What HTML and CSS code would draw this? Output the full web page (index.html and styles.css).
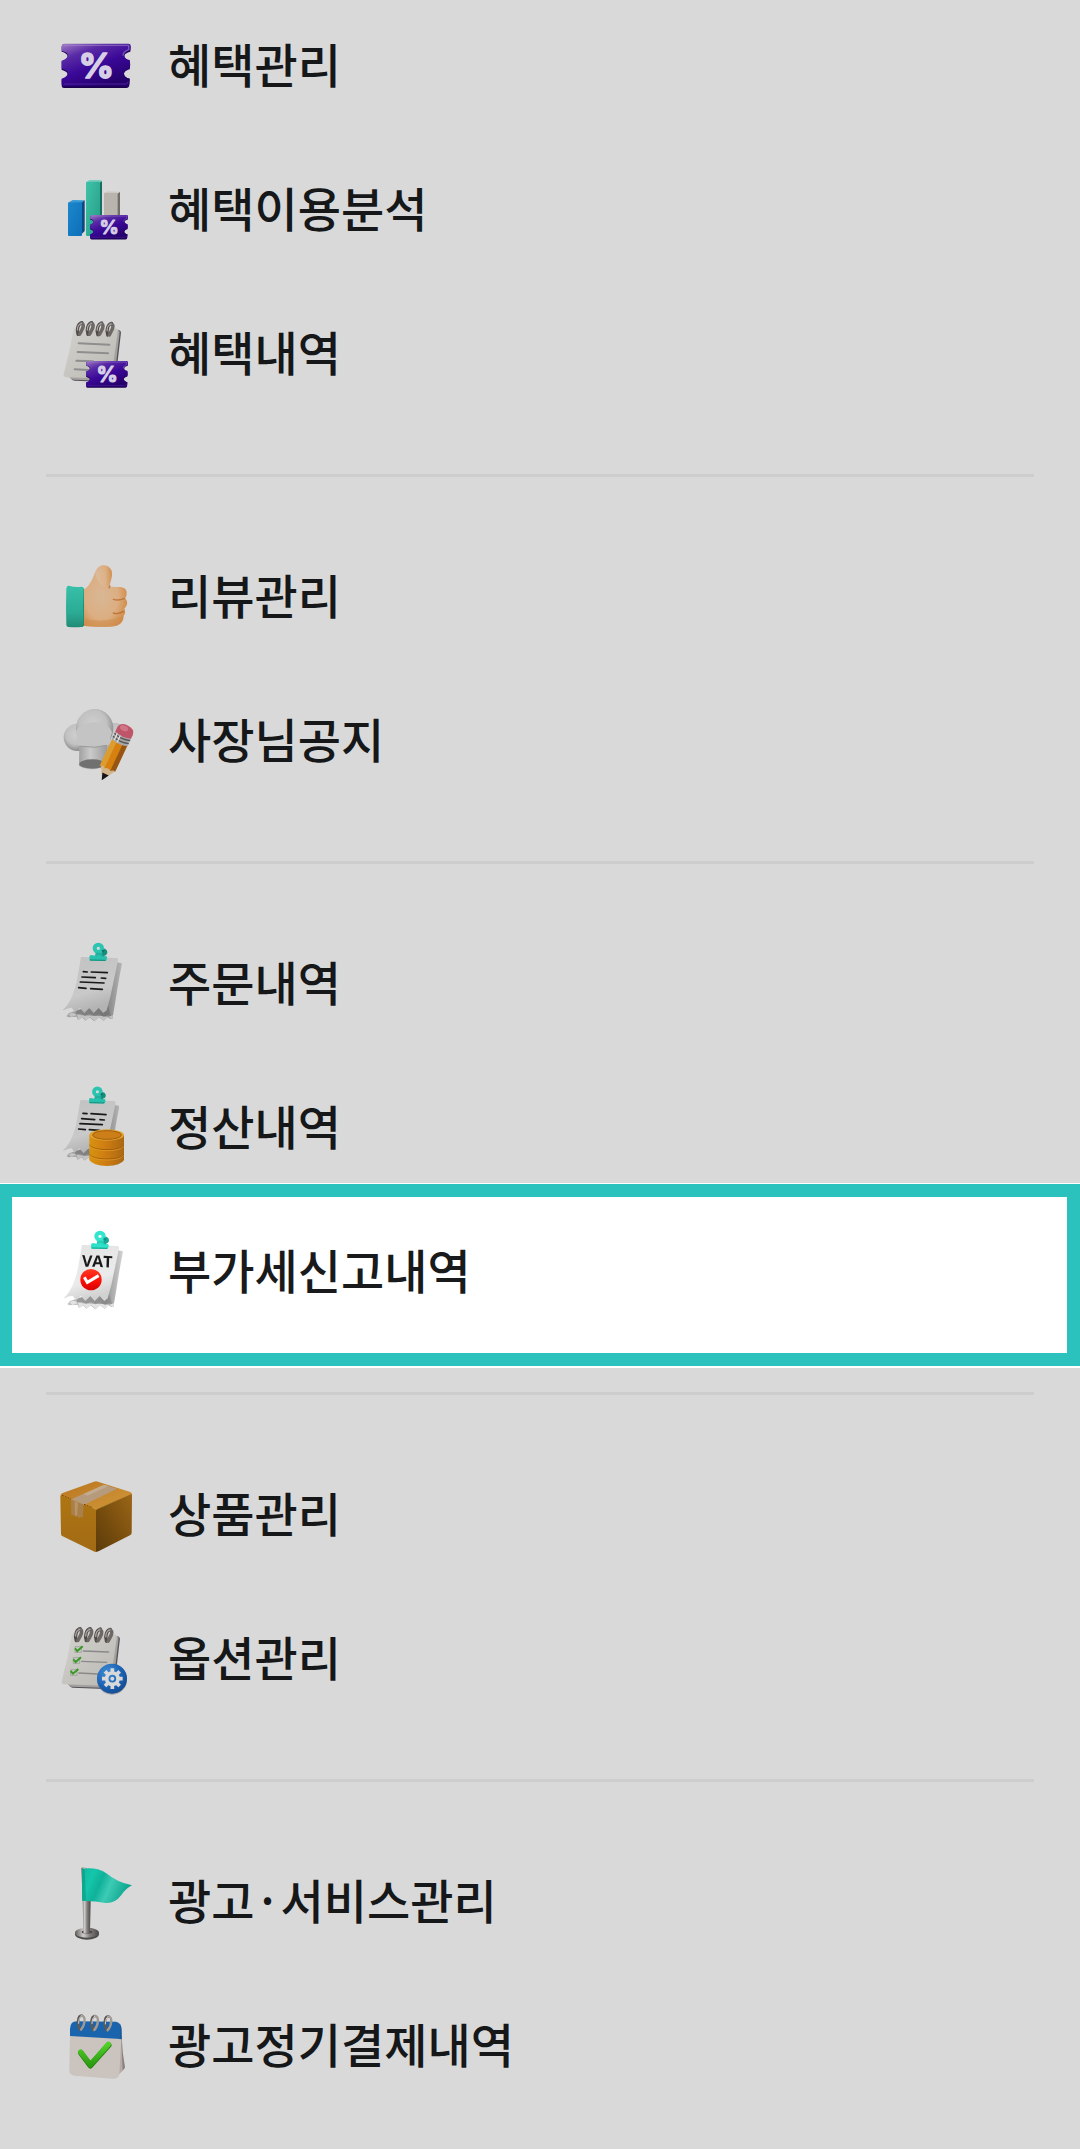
FILE: index.html
```html
<!DOCTYPE html>
<html lang="ko">
<head>
  <meta charset="UTF-8">
  <meta name="viewport" content="width=device-width, initial-scale=1">
  <title>전체 메뉴</title>
  <link rel="stylesheet" href="styles.css">
</head>
<body>
  <!-- shared gradients and symbols -->
  <svg class="defs" aria-hidden="true">
    <defs>
      <linearGradient id="purple" x1="0" y1="0" x2=".6" y2="1">
        <stop offset="0" stop-color="#a07cc4"/>
        <stop offset=".28" stop-color="#5a2ba6"/>
        <stop offset=".6" stop-color="#3a0897"/>
        <stop offset="1" stop-color="#25006c"/>
      </linearGradient>
      <linearGradient id="paper" x1="0" y1="0" x2="1" y2="1">
        <stop offset="0" stop-color="#d3d2cd"/>
        <stop offset="1" stop-color="#b9b8b3"/>
      </linearGradient>
      <linearGradient id="receiptFront" x1="0" y1="0" x2=".3" y2="1">
        <stop offset="0" stop-color="#c2c2c2"/>
        <stop offset=".7" stop-color="#c9c9c9"/>
        <stop offset="1" stop-color="#b3b3b3"/>
      </linearGradient>
      <linearGradient id="receiptBack" x1="0" y1="0" x2="1" y2="0">
        <stop offset="0" stop-color="#a8a8a8"/>
        <stop offset=".7" stop-color="#808080"/>
        <stop offset="1" stop-color="#b4b4b4"/>
      </linearGradient>
      <linearGradient id="metal" x1="0" y1="0" x2="1" y2="0">
        <stop offset="0" stop-color="#5e5c5a"/>
        <stop offset=".35" stop-color="#cfcdca"/>
        <stop offset=".6" stop-color="#858280"/>
        <stop offset="1" stop-color="#4a4847"/>
      </linearGradient>
      <linearGradient id="blueBar" x1="0" y1="0" x2="1" y2="1">
        <stop offset="0" stop-color="#1b87cc"/>
        <stop offset="1" stop-color="#0d6fb8"/>
      </linearGradient>
      <linearGradient id="greenBar" x1="0" y1="0" x2="1" y2="1">
        <stop offset="0" stop-color="#3fc2a9"/>
        <stop offset="1" stop-color="#249d85"/>
      </linearGradient>
      <linearGradient id="sleeve" x1="0" y1="0" x2="0" y2="1">
        <stop offset="0" stop-color="#37c0a9"/>
        <stop offset=".65" stop-color="#2bab95"/>
        <stop offset="1" stop-color="#218a74"/>
      </linearGradient>
      <radialGradient id="skin" cx=".42" cy=".5" r=".62">
        <stop offset="0" stop-color="#d8b795"/>
        <stop offset=".6" stop-color="#dcae82"/>
        <stop offset="1" stop-color="#d08a45"/>
      </radialGradient>
      <linearGradient id="thumb" x1="0" y1="0" x2="1" y2="0">
        <stop offset="0" stop-color="#dcc0a6"/>
        <stop offset=".6" stop-color="#deb48b"/>
        <stop offset="1" stop-color="#cd8540"/>
      </linearGradient>
      <radialGradient id="hat" cx=".45" cy=".4" r=".62">
        <stop offset="0" stop-color="#cfcfcf"/>
        <stop offset=".6" stop-color="#c1c1c1"/>
        <stop offset="1" stop-color="#858585"/>
      </radialGradient>
      <linearGradient id="hatBand" x1="0" y1="0" x2="1" y2="0">
        <stop offset="0" stop-color="#a0a0a0"/>
        <stop offset=".4" stop-color="#cacaca"/>
        <stop offset="1" stop-color="#9a9a9a"/>
      </linearGradient>
      <linearGradient id="gold" x1="0" y1="0" x2="1" y2="0">
        <stop offset="0" stop-color="#d8930f"/>
        <stop offset=".45" stop-color="#cf7d12"/>
        <stop offset="1" stop-color="#a96812"/>
      </linearGradient>
      <linearGradient id="boxTop" x1="0" y1="0" x2="1" y2="1">
        <stop offset="0" stop-color="#b9741f"/>
        <stop offset="1" stop-color="#d39b3c"/>
      </linearGradient>
      <linearGradient id="boxLeft" x1="0" y1="0" x2="0" y2="1">
        <stop offset="0" stop-color="#ae7512"/>
        <stop offset="1" stop-color="#a26a15"/>
      </linearGradient>
      <linearGradient id="boxRight" x1="0" y1="1" x2="1" y2="0">
        <stop offset="0" stop-color="#5c3b0b"/>
        <stop offset=".4" stop-color="#744b0d"/>
        <stop offset="1" stop-color="#9c6617"/>
      </linearGradient>
      <radialGradient id="blueBall" cx=".35" cy=".3" r=".75">
        <stop offset="0" stop-color="#3f8ed6"/>
        <stop offset=".6" stop-color="#1d63b4"/>
        <stop offset="1" stop-color="#144b91"/>
      </radialGradient>
      <linearGradient id="flag" x1="0" y1="0" x2="1" y2=".3">
        <stop offset="0" stop-color="#10b79d"/>
        <stop offset=".25" stop-color="#14c6ab"/>
        <stop offset=".45" stop-color="#0fb199"/>
        <stop offset=".65" stop-color="#3ccbb5"/>
        <stop offset="1" stop-color="#0fa68f"/>
      </linearGradient>
      <linearGradient id="green" x1="0" y1="0" x2="0" y2="1">
        <stop offset="0" stop-color="#52cf28"/>
        <stop offset="1" stop-color="#2e9c12"/>
      </linearGradient>
      <linearGradient id="red" x1="0" y1="0" x2="0" y2="1">
        <stop offset="0" stop-color="#d8321f"/>
        <stop offset=".5" stop-color="#d90f08"/>
        <stop offset="1" stop-color="#b80000"/>
      </linearGradient>
    </defs>

    <symbol id="ticket" viewBox="0 0 210 134">
      <path fill="#1b0050" d="M8 3H202q6 1 6 7l-1 14c-10 2-18 7-18 14s7 11 16 13q3 12 0 26c-9 2-17 7-17 14s7 12 17 14l-1 19q-1 9-9 9H8q-7 0-7-7V107c10-2 18-7 18-14S11 81 1 79V53c10-2 18-7 18-14S11 26 1 24V9q0-6 7-6z"/>
      <path fill="url(#purple)" d="M8 0H202q6 0 6 6l-1 14c-10 2-18 9-18 16s7 11 16 13q3 12 0 26c-9 2-17 9-17 16s7 12 17 14l-1 15q-1 8-9 8H8q-7 0-7-7V105c10-2 18-9 18-16S11 77 1 75V51c10-2 18-9 18-16S11 24 1 22V7q0-7 7-7z"/>
      <path fill="none" stroke="#a58bd0" stroke-width="4" opacity=".55" d="M8 5H202v13c-9 3-17 9-17 18"/>
      <path fill="none" stroke="#5a2fa8" stroke-width="3" opacity=".7" d="M8 121H195q5-1 5-7"/>
      <text class="percent" x="105" y="103">%</text>
    </symbol>

    <symbol id="clip" viewBox="0 0 60 56">
      <path fill="#168e7e" d="M40 18c8-2 15 4 15 11 0 6-4 9-9 10l2 7-14-2z"/>
      <circle cx="28" cy="17" r="11" fill="none" stroke="#2ac4b0" stroke-width="12"/>
      <circle cx="42" cy="25" r="4" fill="#10786b"/>
      <path fill="#20b09d" d="M20 30h18l4 10H18z"/>
      <path fill="#27c0ac" d="M6 37q-5 0-5 8t2 9l46 1q4-1 5-8 0-7-3-7-10 2-17-1-5-5-10 0-6 1-18-2z"/>
      <path stroke="#14897a" stroke-width="3" d="M3 52l47 1"/>
    </symbol>

    <symbol id="receipt" viewBox="0 0 180 200">
      <path fill="url(#receiptBack)" d="M160 16l15 2q2 1 1 7-7 34-14 78-6 40-14 83-12-2-14-7l-12 12-14-11-14 13-14-12-13 10-9-10-13 8-4-10-24 2-7-3 8-10 60-20z"/>
      <path fill="#c2c2c2" d="M17 172l8 8 17-6 4 15 13-9 9 11 13-11 14 13 14-13 13 12 13-13 13 8 2-12-14 4-20-2-60-2-30-8z"/>
      <path fill="#6c6c6c" opacity=".5" d="M36 160l100-12 8 30-10-4-12 6-13-9-15 7-14-8-14 7-13-7-14 4z"/>
      <path fill="url(#receiptFront)" d="M55 0L161 3q5 1 4 7-6 30-15 72-7 40-19 78l-10 8-14-15-15 15-13-15-15 15-13-15-15 13-10-14q-12 1-25 8-2 0-1-2C16 146 35 110 43 63Q49 31 53 5q0-4 2-5z"/>
    </symbol>

    <symbol id="notepad" viewBox="0 0 190 200">
      <path fill="#565058" d="M160 26l15 4q7 2 5 12l-17 145q-1 6-8 6l-120-5q-8-1-12-9l-6-12z"/>
      <path fill="#a3a19d" d="M155 24l16 5q7 2 5 12l-17 143q-1 6-8 5L31 185q-8-1-12-9l-6-12z"/>
      <path fill="url(#paper)" d="M32 26q3-8 12-8l119 6q9 1 8 9l-21 144q-1 6-8 5L9 177q-10-1-8-10L20 90z"/>
      <g fill="none" stroke-linecap="round">
        <path stroke="#4f4a48" stroke-width="10" d="M46 43c-6-17 1-34 12-37M77 43c-6-17 1-34 12-37M108 44c-6-17 1-34 12-37M139 45c-6-17 1-34 12-37"/>
        <path stroke="#6d6765" stroke-width="11" d="M56 8c12 3 5 17-5 34M87 8c12 3 5 17-5 34M118 9c12 3 5 17-5 34M149 10c12 3 5 17-5 34"/>
        <path stroke="#aaa6a3" stroke-width="4" d="M44 29c0-11 6-19 13-21M75 29c0-11 6-19 13-21M106 30c0-11 6-19 13-21M137 31c0-11 6-19 13-21"/>
      </g>
    </symbol>
  </svg>

  <nav class="menu" aria-label="전체 메뉴">
    <ul class="menu-group">
      <li>
        <a class="menu-item" href="#benefit">
          <svg class="icon" viewBox="48 18 240 240" aria-hidden="true">
            <use href="#ticket" x="64" y="71" width="210" height="134"/>
          </svg>
          <span class="label">혜택관리</span>
        </a>
      </li>
      <li>
        <a class="menu-item" href="#benefit-analysis">
          <svg class="icon" viewBox="48 450 240 240" aria-hidden="true">
            <path fill="#0a4a80" d="M118 548l16-7v92l-14 14z"/>
            <path fill="#3b9ad4" d="M84 548l14-8 36 1-10 8z"/>
            <rect x="84" y="547" width="42" height="101" rx="3" fill="url(#blueBar)"/>
            <path fill="#17705f" d="M176 488l10-6v116h-10z"/>
            <path fill="#76cdbc" d="M138 488l10-8h34l4 4-10 6z"/>
            <rect x="138" y="485" width="42" height="163" rx="3" fill="url(#greenBar)"/>
            <path fill="#716d69" d="M230 520l10-4v80h-10z"/>
            <path fill="#d2cec8" d="M192 519l12-6 36 2-8 6z"/>
            <rect x="192" y="518" width="41" height="80" rx="3" fill="#b9b4ad"/>
            <use href="#ticket" x="150" y="585" width="115" height="74"/>
          </svg>
          <span class="label">혜택이용분석</span>
        </a>
      </li>
      <li>
        <a class="menu-item" href="#benefit-history">
          <svg class="icon" viewBox="48 42 240 240" aria-hidden="true">
            <use href="#notepad" x="70" y="62" width="182" height="192"/>
            <path fill="none" stroke="#8e8e8e" stroke-width="6" stroke-linecap="round" d="M116 130l92 4M113 156l91 4M109 182l50 2M104 208l40 2"/>
            <use href="#ticket" x="138" y="183" width="127" height="81"/>
          </svg>
          <span class="label">혜택내역</span>
        </a>
      </li>
    </ul>

    <ul class="menu-group">
      <li>
        <a class="menu-item" href="#review">
          <svg class="icon" viewBox="48 51 240 240" aria-hidden="true">
            <path fill="url(#skin)" d="M128 150c20-9 29-32 38-54 7-18 22-24 37-16 12 7 15 19 12 33-2 10-5 18-5 27l27 1c15 0 24 7 23 18 0 8-2 12-5 16 9 8 9 21-2 31 4 7 3 15-2 21 0 20-13 31-36 33-34 2-63 0-87-3z"/>
            <path fill="url(#thumb)" opacity=".7" d="M166 96c8-20 23-25 37-18 12 7 15 19 12 33-2 10-6 18-7 27-18 8-40-10-42-42z"/>
            <path fill="none" stroke="#b96a2c" stroke-width="4" stroke-linecap="round" opacity=".8" d="M220 178q16 5 34-3M220 219q14 5 30-5M210 138l-3 6"/>
            <path fill="#ce8b4c" opacity=".5" d="M128 235q60 16 121-7-4 26-34 29-44 4-87-1z"/>
            <path fill="#1c7a67" d="M124 142q8 0 8 10v101q0 8-6 8z"/>
            <path fill="url(#sleeve)" d="M86 137q21 6 39 3 7 0 6 10-2 50 0 101 0 10-7 10-19 2-38 0-7 0-7-8-2-52 0-107 1-9 7-9z"/>
          </svg>
          <span class="label">리뷰관리</span>
        </a>
      </li>
      <li>
        <a class="menu-item" href="#notice">
          <svg class="icon" viewBox="48 483 240 240" aria-hidden="true">
            <circle cx="222" cy="590" r="41" fill="url(#hat)"/>
            <circle cx="112" cy="592" r="41" fill="url(#hat)"/>
            <ellipse cx="164" cy="565" rx="56" ry="58" fill="url(#hat)"/>
            <path fill="#c4c4c4" d="M108 574q10-24 56-28 40 2 52 30l-14 50H118z"/>
            <path fill="url(#hatBand)" d="M118 618q40 10 84-4v58q-42 30-85 5z"/>
            <path fill="none" stroke="#999" stroke-width="3" d="M112 624q6-8 16-5 36 7 72-3"/>
            <ellipse cx="157" cy="672" rx="39" ry="14" fill="#707070"/>
            <g transform="translate(186 719) rotate(25)">
              <path fill="#d2b48b" d="M-22-40L0 0l26-40z"/>
              <path fill="#161616" d="M-8-20L0 2l13-22z"/>
              <path fill="#dd9d2e" d="M-24-126h18v92q-9-10-18 0z"/>
              <path fill="#d6800f" d="M-8-126H12v92q-10-8-20 0z"/>
              <path fill="#985510" d="M11-126h15v88q-8-4-15 4z"/>
              <path fill="#a8a8a8" d="M-25-149h52v26q-26 9-52 0z"/>
              <path fill="none" stroke="#555" stroke-width="4" d="M-25-142q26 9 52 0M-25-132q26 9 52 0"/>
              <path fill="none" stroke="#e0e0e0" stroke-width="4" d="M-17-147v24M-6-144v24"/>
              <path fill="#bf5569" d="M-25-148v-12q1-20 26-20t26 20v12q-26 9-52 0z"/>
              <ellipse cx="-5" cy="-168" rx="13" ry="8" fill="#d78391" opacity=".7"/>
            </g>
          </svg>
          <span class="label">사장님공지</span>
        </a>
      </li>
    </ul>

    <ul class="menu-group">
      <li>
        <a class="menu-item" href="#orders">
          <svg class="icon" viewBox="48 72 240 240" aria-hidden="true">
            <use href="#receipt" x="69" y="111" width="180" height="200"/>
            <use href="#clip" x="147" y="68" width="60" height="56"/>
            <path fill="none" stroke="#191919" stroke-width="5" stroke-linecap="round" d="M130 155l12 1M154 156l48 2M126 171l40 2M184 174l13 1M121 186l71 3M116 203l22 2M152 206l35 2"/>
          </svg>
          <span class="label">주문내역</span>
        </a>
      </li>
      <li>
        <a class="menu-item" href="#settlement">
          <svg class="icon" viewBox="48 504 240 240" aria-hidden="true">
            <use href="#receipt" x="70" y="540" width="171" height="190"/>
            <use href="#clip" x="146" y="499" width="56" height="53"/>
            <path fill="none" stroke="#191919" stroke-width="5" stroke-linecap="round" d="M129 580l12 1M153 581l45 3M125 596l39 3M180 599l13 1M120 611l67 3M116 627l20 2M148 629l30 2"/>
            <path fill="url(#gold)" d="M148 646v74q10 17 53 18 42-1 51-18v-74z"/>
            <path fill="none" stroke="#8d4e08" stroke-width="2" d="M148 675q12 14 53 14 42 0 51-14M148 703q12 14 53 14 42 0 51-14"/>
            <path fill="none" stroke="#e3a02a" stroke-width="2" d="M149 678q12 14 52 14 40 0 50-14M149 706q12 14 52 14 40 0 50-14"/>
            <ellipse cx="200" cy="645" rx="52" ry="17" fill="#e0a22c"/>
            <ellipse cx="201" cy="645" rx="43" ry="13" fill="#cc7f19" stroke="#a35e0c" stroke-width="3"/>
          </svg>
          <span class="label">정산내역</span>
        </a>
      </li>
      <li>
        <a class="menu-item menu-item--active" href="#vat" aria-current="page">
          <svg class="icon" viewBox="168 186 240 240" aria-hidden="true">
            <use href="#receipt" x="192" y="225" width="180" height="200"/>
            <use href="#clip" x="272" y="182" width="60" height="56"/>
            <text class="vat" x="291" y="291" transform="rotate(2 291 291)">VAT</text>
            <circle cx="273" cy="329" r="32" fill="url(#red)"/>
            <path fill="none" stroke="#d9d9d9" stroke-width="9" d="M253 322l9 15 34-20"/>
          </svg>
          <span class="label">부가세신고내역</span>
        </a>
      </li>
    </ul>

    <ul class="menu-group">
      <li>
        <a class="menu-item" href="#products">
          <svg class="icon" viewBox="48 45 240 240" aria-hidden="true">
            <path fill="url(#boxTop)" d="M62 105q1-4 6-6l94-34q6-3 12 0l97 31q5 2 5 7l-106 51z"/>
            <path fill="url(#boxLeft)" d="M61 109q0-6 6-3l102 42v128q-5 0-10-3L68 229q-5-2-5-8z"/>
            <path fill="url(#boxRight)" d="M168 152q0-5 6-7l96-43q6-2 6 4l-1 112q0 5-5 8l-93 47q-5 3-9 2z"/>
            <path fill="none" stroke="#d9a343" stroke-width="3" opacity=".6" d="M64 106l105 42 103-46"/>
            <path fill="#b69a7c" d="M94 118l98-44 39 12-99 49z"/>
            <path fill="#c9b59c" opacity=".6" d="M130 102l62-28 14 4-64 29z"/>
            <path fill="#a98049" d="M93 118l38 16-3 40-5-3-6 3-6-5-6 1-5-5-6 1z"/>
            <path fill="#c4a47c" opacity=".6" d="M104 124l10 4-3 40-6-3z"/>
            <path fill="none" stroke="#704508" stroke-width="3" stroke-dasharray="6 3" d="M66 106l27 11M132 133l26 10"/>
          </svg>
          <span class="label">상품관리</span>
        </a>
      </li>
      <li>
        <a class="menu-item" href="#options">
          <svg class="icon" viewBox="48 477 240 240" aria-hidden="true">
            <use href="#notepad" x="64" y="500" width="185" height="195"/>
            <path fill="none" stroke="#898989" stroke-width="4" stroke-linecap="round" d="M130 573l76 3M125 604l75 3M117 639l56 3"/>
            <path fill="#c9c9c6" stroke="#929292" stroke-width="2" d="M105 560h19v17h-19zM100 593h19v17h-19zM92 629h19v17H92z"/>
            <path fill="none" stroke="#369b20" stroke-width="6" d="M105 565l7 8 16-14M100 598l7 8 16-14M92 633l7 8 16-14"/>
            <circle cx="216" cy="659" r="45" fill="#6c6c6c" opacity=".5"/>
            <circle cx="216" cy="656" r="45" fill="url(#blueBall)"/>
            <g transform="translate(217 656)" stroke="#d9d9d9" fill="none">
              <circle r="17" stroke-width="11"/>
              <path stroke-width="11" d="M0-20v-11M0 20v11M20 0h11M-20 0h-11M14-14l8-8M-14 14l-8 8M14 14l8 8M-14-14l-8-8"/>
              <circle r="6" stroke="none" fill="#d9d9d9"/>
            </g>
          </svg>
          <span class="label">옵션관리</span>
        </a>
      </li>
    </ul>

    <ul class="menu-group">
      <li>
        <a class="menu-item" href="#ads">
          <svg class="icon" viewBox="48 36 240 240" aria-hidden="true">
            <ellipse cx="141" cy="253" rx="36" ry="16" fill="#4d4b49"/>
            <ellipse cx="141" cy="248" rx="36" ry="15" fill="url(#metal)"/>
            <ellipse cx="141" cy="246" rx="16" ry="5" fill="#4b4947"/>
            <path fill="url(#metal)" d="M124 54q7-5 16 0l12 98-2 96q-10 6-20 0l-2-96z"/>
            <path fill="url(#flag)" d="M126 56q46-6 75 15 28 24 75 35-18 9-32 29-19 26-48 24-35-7-66-6-4 0-4-5z"/>
            <path fill="#0c8d7a" opacity=".5" d="M126 58h8l4 94h-12z"/>
          </svg>
          <span class="label">광고<span class="dot">·</span>서비스관리</span>
        </a>
      </li>
      <li>
        <a class="menu-item" href="#ad-payments">
          <svg class="icon" viewBox="48 468 240 240" aria-hidden="true">
            <path fill="#8a7f7b" d="M240 540l5 20q2 50 10 92-1 8-20 16z"/>
            <path fill="#b8aba6" d="M238 550l6 20 4 92-16 16z"/>
            <path fill="#cac3be" d="M90 555l154 10-6 108q-2 14-18 13l-116-9q-17-3-16-18z"/>
            <path fill="#0d4c8b" d="M236 520q9 5 9 22v26l-8-1z"/>
            <path fill="#1a64ae" d="M90 558v-22q1-22 20-22l118 1q14 2 14 20v32z"/>
            <g fill="none" stroke-linecap="round">
              <path stroke="#5f5955" stroke-width="8" d="M120 539c-9-15-7-42 5-42M160 540c-9-15-7-42 5-42M200 541c-9-15-7-42 5-42"/>
              <path stroke="#a09a94" stroke-width="7" d="M125 497c12 0 12 25-2 42M165 498c12 0 12 25-2 42M205 499c12 0 12 25-2 42"/>
              <path stroke="#d4d0cb" stroke-width="3" d="M116 520q0-18 8-22M156 521q0-18 8-22M196 522q0-18 8-22"/>
            </g>
            <path fill="none" stroke="#238010" stroke-width="17" stroke-linecap="round" stroke-linejoin="round" d="M123 609l28 38 55-62"/>
            <path fill="none" stroke="url(#green)" stroke-width="16" stroke-linecap="round" stroke-linejoin="round" d="M122 606l29 38 54-61"/>
          </svg>
          <span class="label">광고정기결제내역</span>
        </a>
      </li>
    </ul>
  </nav>
</body>
</html>
```
FILE: styles.css
```css
* {
  box-sizing: border-box;
}

body {
  margin: 0;
  background-color: #d9d9d9;
  color: #151719;
  font-family: "Noto Sans CJK KR", "Noto Sans", sans-serif;
  overflow-x: hidden;
}

.defs {
  position: absolute;
  width: 0;
  height: 0;
}

symbol {
  overflow: visible;
}

/* the list is scrolled slightly past its top */
.menu {
  margin-top: -6px;
}

.menu-group {
  position: relative;
  list-style: none;
  margin: 0;
  padding: 0;
}

.menu-group + .menu-group {
  margin-top: 48px;
  padding-top: 51px;
}

.menu-group + .menu-group::before {
  content: "";
  position: absolute;
  top: 0;
  left: 46px;
  right: 46px;
  height: 3px;
  background-color: #cdcdcd;
}

.menu-item {
  display: flex;
  align-items: center;
  gap: 32px;
  height: 144px;
  padding: 0 56px;
  color: inherit;
  font-size: 47px;
  font-weight: 500;
  line-height: 1;
  text-decoration: none;
}

.icon {
  flex: none;
  width: 80px;
  height: 80px;
  overflow: visible;
}

.label {
  padding-bottom: 8px;
}

.dot {
  margin: 0 6px;
}

/* highlighted row, the frame lies over the space around it */
.menu-item--active {
  position: relative;
  isolation: isolate;
  color: #191a1b;
}

.menu-item--active::before {
  content: "";
  position: absolute;
  z-index: -1;
  inset: -16px 0 -22px;
  border: 13px solid #2bc1bd;
  border-left-width: 12px;
  background-color: #fff;
  box-shadow: 0 -1px 0 #fff, 0 2px 0 #fff;
}

.menu-item--active .icon {
  filter: brightness(1.17);
}

.percent {
  font-family: Inter, sans-serif;
  font-size: 104px;
  font-weight: 700;
  text-anchor: middle;
  fill: #d6cfe6;
  stroke: #d6cfe6;
  stroke-width: 5px;
  stroke-linejoin: round;
}

.vat {
  font-family: "Open Sans", sans-serif;
  font-size: 48px;
  font-weight: 700;
  text-anchor: middle;
  fill: #151515;
}
```
